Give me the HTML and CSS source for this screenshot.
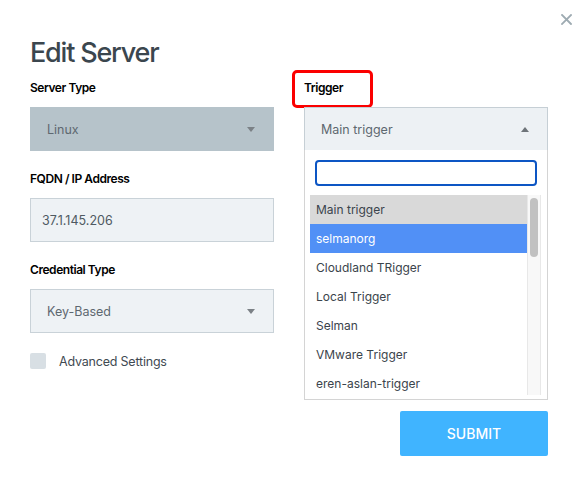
FILE: index.html
```html
<!DOCTYPE html>
<html>
<head>
<meta charset="utf-8">
<link rel="stylesheet" href="styles.css">
</head>
<body>
<div class="modal">
  <button class="close" aria-label="Close">
    <svg width="11" height="11" viewBox="0 0 11 11"><path d="M1 1L10 10M10 1L1 10" stroke="#9eabb2" stroke-width="1.8" stroke-linecap="square"/></svg>
  </button>
  <h1 class="title">Edit Server</h1>
  <div class="grid">
    <div class="col">
      <div class="field">
        <label class="label">Server Type</label>
        <div class="select disabled"><span>Linux</span><span class="caret down"></span></div>
      </div>
      <div class="field">
        <label class="label">FQDN / IP Address</label>
        <div class="input">37.1.145.206</div>
      </div>
      <div class="field">
        <label class="label">Credential Type</label>
        <div class="select"><span>Key-Based</span><span class="caret down"></span></div>
      </div>
      <div class="check">
        <span class="box"></span>
        <span class="check-label">Advanced Settings</span>
      </div>
    </div>
    <div class="col">
      <div class="field">
        <label class="label"><span class="highlight">Trigger</span></label>
        <div class="dd-wrap">
          <div class="select open"><span>Main trigger</span><span class="caret up"></span></div>
          <div class="dropdown">
            <div class="search"></div>
            <div class="list">
              <ul class="options">
                <li class="opt current">Main trigger</li>
                <li class="opt hover">selmanorg</li>
                <li class="opt">Cloudland TRigger</li>
                <li class="opt">Local Trigger</li>
                <li class="opt">Selman</li>
                <li class="opt">VMware Trigger</li>
                <li class="opt">eren-aslan-trigger</li>
              </ul>
              <div class="scrollbar"><div class="thumb"></div></div>
            </div>
          </div>
        </div>
      </div>
    </div>
  </div>
  <div class="actions">
    <button class="submit">SUBMIT</button>
  </div>
</div>
</body>
</html>
```
FILE: styles.css
```css
* { box-sizing: border-box; }
html, body { margin: 0; padding: 0; background: #fff; }
body {
  font-family: Inter, "Noto Sans", "Liberation Sans", sans-serif;
  width: 578px;
  height: 479px;
  overflow: hidden;
}
.modal {
  position: relative;
  width: 578px;
  height: 479px;
  padding: 36px 30px 0 30px;
}
.close {
  position: absolute;
  top: 13px;
  right: 5px;
  width: 13px;
  height: 13px;
  padding: 1px;
  border: 0;
  background: none;
  display: flex;
}
.title {
  margin: 0;
  font-size: 27px;
  line-height: 34px;
  font-weight: 500;
  letter-spacing: -1.2px;
  color: #3b464e;
}
.grid {
  display: grid;
  grid-template-columns: 244px 244px;
  column-gap: 30px;
  margin-top: 10px;
}
.col {
  display: flex;
  flex-direction: column;
  gap: 20px;
}
.field {
  display: flex;
  flex-direction: column;
  gap: 11px;
}
.label {
  font-size: 12px;
  line-height: 16px;
  font-weight: 600;
  color: #000;
  letter-spacing: -0.45px;
}
.highlight {
  position: relative;
  display: inline-block;
}
.highlight::after {
  content: "";
  position: absolute;
  left: -12px;
  top: -10px;
  width: 75px;
  height: 32px;
  border: 3px solid #fb0000;
  border-radius: 5px;
}
.select, .input {
  height: 44px;
  display: flex;
  align-items: center;
  justify-content: space-between;
  padding: 0 16px 0 16px;
  font-size: 12.5px;
  color: #5e6870;
  background: #eef2f5;
  border: 1px solid #c9d2d8;
}
.input { padding-left: 11px; color: #4f5a62; }
.select.disabled {
  background: #b6c3ca;
  border-color: #b6c3ca;
}
.select.open {
  background: #edf1f4;
  border-color: #c6cfd5;
}
.caret {
  width: 0;
  height: 0;
  border-left: 4px solid transparent;
  border-right: 4px solid transparent;
}
.caret.down { border-top: 5px solid #7b8186; margin-right: 2px; }
.caret.up { border-bottom: 5px solid #6e7479; margin-right: 2px; }
.check {
  display: flex;
  align-items: center;
  gap: 13px;
}
.check .box {
  width: 16px;
  height: 16px;
  background: #d8dfe4;
  border-radius: 2px;
}
.check-label {
  font-size: 12.5px;
  color: #3f4a52;
  letter-spacing: -0.2px;
}
.dd-wrap { position: relative; }
.dropdown {
  position: absolute;
  left: 0;
  right: 0;
  top: 43px;
  height: 250px;
  background: #fff;
  border: 1px solid #d4d4d4;
  border-top: 0;
  padding: 10px 6px 0 5px;
}
.search {
  height: 26px;
  margin: 0 4px 0 5px;
  border: 2px solid #0d56c4;
  border-radius: 4px;
  background: #fff;
}
.list {
  margin-top: 9px;
  height: 200px;
  display: flex;
  overflow: hidden;
}
.options {
  list-style: none;
  margin: 0;
  padding: 0;
  flex: 1;
}
.opt {
  height: 29px;
  display: flex;
  align-items: center;
  padding-left: 6px;
  font-size: 12px;
  color: #3b444c;
}
.opt.current { background: #d9d9d9; }
.opt.hover { background: #5190f6; color: #fff; }
.scrollbar {
  width: 14px;
  background: #f8f8f8;
  border-left: 1px solid #e8e8e8;
  border-right: 1px solid #e8e8e8;
  padding: 3px 2px;
}
.thumb {
  height: 59px;
  border-radius: 4px;
  background: #c1c1c1;
}
.actions {
  display: flex;
  justify-content: flex-end;
  margin-top: 42px;
}
.submit {
  width: 148px;
  height: 45px;
  border: 0;
  border-radius: 2px;
  background: #40b4ff;
  color: #fff;
  font-family: Inter, "Noto Sans", sans-serif;
  font-size: 14px;
  font-weight: 500;
  letter-spacing: 0;
}
```
